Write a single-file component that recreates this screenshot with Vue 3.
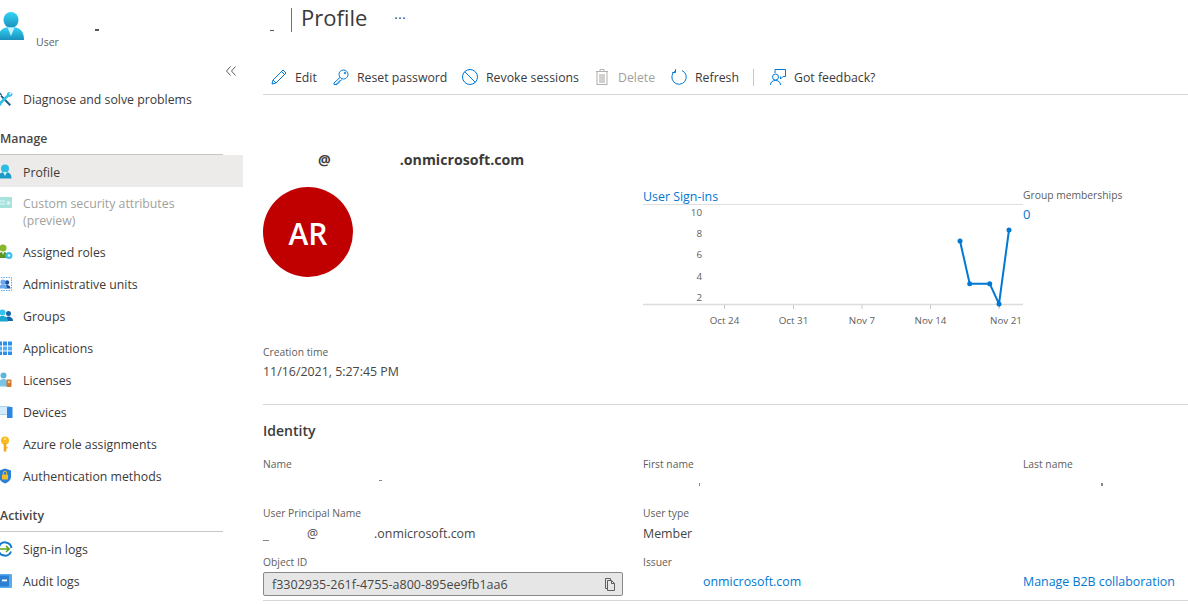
<script setup>
const xTicks = [
  { x: 81.5, tx: 81.5, label: 'Oct 24' },
  { x: 150.5, tx: 150.5, label: 'Oct 31' },
  { x: 219, tx: 219, label: 'Nov 7' },
  { x: 287.5, tx: 287.5, label: 'Nov 14' },
  { x: 356, tx: 363, label: 'Nov 21' },
]
const yTicks = [
  { y: 7, label: '10' },
  { y: 28.5, label: '8' },
  { y: 49.5, label: '6' },
  { y: 71.5, label: '4' },
  { y: 92.5, label: '2' },
]
const points = [
  [317, 36],
  [326.7, 78.7],
  [346.7, 78.7],
  [356, 99],
  [366, 25],
]
const linePoints = points.map((p) => p.join(',')).join(' ')
</script>

<template>
  <div class="page">
    <aside class="sidebar">
      <div class="res-head">
        <svg class="res-icon" width="28" height="29" viewBox="0 0 28 29">
          <defs>
            <linearGradient id="personGrad" x1="0" y1="0" x2="0" y2="1">
              <stop offset="0" stop-color="#32d4f5" />
              <stop offset="1" stop-color="#1a8fbd" />
            </linearGradient>
          </defs>
          <ellipse cx="14" cy="8" rx="7.500" ry="8" fill="url(#personGrad)" />
          <path d="M1 28c0-9 4-13 13-13s13 4 13 13z" fill="url(#personGrad)" />
          <path d="M10.500 15.500h7L14 24z" fill="#c9f1fb" />
        </svg>
        <div class="res-text">
          <span class="speck name-speck"></span>
          <div class="res-type">User</div>
        </div>
      </div>
      <div class="collapse">
        <svg width="10" height="10" viewBox="0 0 10 10" fill="none" stroke="#605e5c">
          <path d="M4.500 .5L.5 5l4 4.500M9.500 .5L5.500 5l4 4.500" />
        </svg>
      </div>

      <div class="nav-item">
        <svg class="nav-icon" viewBox="0 0 16 16">
          <path d="M3 1.500l2 2-1 1-2-2zM4.500 4l9.500 9.500-1.500 1.500L3.500 5.500z" fill="#1c5f8c" />
          <path d="M15 1.500a3 3 0 0 1-3.500 4.300L4.500 13a2 2 0 1 1-2-2l7.300-7A3 3 0 0 1 13.500 1L12 3l1 1z" fill="#32bfe8" />
        </svg>
        <span>Diagnose and solve problems</span>
      </div>

      <div class="section">Manage</div>
      <div class="nav-item active nudge">
        <svg class="nav-icon" viewBox="0 0 16 16">
          <circle cx="8" cy="4.500" r="4" fill="#2cbde4" />
          <path d="M1.500 14.500c0-4.500 2.500-6.500 6.500-6.500s6.500 2 6.500 6.500z" fill="#1a9ac6" />
          <path d="M6 8h4l-2 4z" fill="#d7f4fb" />
        </svg>
        <span>Profile</span>
      </div>
      <div class="nav-item two-line disabled">
        <svg class="nav-icon" viewBox="0 0 16 16">
          <rect x="1" y="2" width="14" height="11" rx="1" fill="#a6e3dc" />
          <path d="M3 6h5M3 9h5" stroke="#e4f7f5" stroke-width="1.200" />
          <circle cx="11.500" cy="8" r="2" fill="#d8f3ef" />
        </svg>
        <span>Custom security attributes<br />(preview)</span>
      </div>
      <div class="nav-item">
        <svg class="nav-icon" viewBox="0 0 16 16">
          <circle cx="6" cy="4" r="3.500" fill="#86b82c" />
          <path d="M0 14c0-4 2.500-6 6-6s6 2 6 6z" fill="#5e9624" />
          <path d="M4.800 8h2.400L6 11z" fill="#e2f0c8" />
          <circle cx="12" cy="11.500" r="3.500" fill="#3fc1ea" />
          <circle cx="12" cy="11.500" r="1.200" fill="#d6f3fb" />
        </svg>
        <span>Assigned roles</span>
      </div>
      <div class="nav-item">
        <svg class="nav-icon" viewBox="0 0 16 16">
          <rect x="1.500" y="1.500" width="13" height="13" fill="none" stroke="#5aaef0" stroke-dasharray="1.500 1" />
          <circle cx="10" cy="6.500" r="2.200" fill="#1b4f9c" />
          <path d="M7.500 12.500c0-2.500 1-3.500 2.500-3.500s3.500 1 3.500 3.500z" fill="#1b4f9c" />
          <circle cx="6" cy="6" r="2.600" fill="#6ea9f0" />
          <path d="M2 12.500c0-3 1.500-4.200 4-4.200s4 1.200 4 4.200z" fill="#6ea9f0" />
        </svg>
        <span>Administrative units</span>
      </div>
      <div class="nav-item">
        <svg class="nav-icon" viewBox="0 0 16 16">
          <circle cx="11.500" cy="5.500" r="2.500" fill="#1464a8" />
          <path d="M8 13c0-3 1.500-4.500 3.500-4.500S16 10 16 13z" fill="#1464a8" />
          <circle cx="5.500" cy="4.500" r="3" fill="#32c4ec" />
          <path d="M0 13.500c0-4 2.500-5.500 5.500-5.500s5.500 1.500 5.500 5.500z" fill="#1da5d2" />
        </svg>
        <span>Groups</span>
      </div>
      <div class="nav-item">
        <svg class="nav-icon" viewBox="0 0 16 16">
          <path fill="#2f8fe6" d="M1 1.500h4v4H1zM6 1.500h4v4H6zM11 1.500h4v4h-4z" />
          <path fill="#58aef2" d="M1 6.500h4v4H1zM6 6.500h4v4H6zM11 6.500h4v4h-4z" />
          <path fill="#2f8fe6" d="M1 11.500h4v3.500H1zM6 11.500h4v3.500H6zM11 11.500h4v3.500h-4z" />
        </svg>
        <span>Applications</span>
      </div>
      <div class="nav-item">
        <svg class="nav-icon" viewBox="0 0 16 16">
          <circle cx="6.500" cy="3.500" r="3" fill="#5db4dc" />
          <path d="M1 14.500c0-5 2.500-7.500 5.500-7.500S12 9.500 12 14.500z" fill="#7ac4e6" />
          <rect x="9.500" y="7.500" width="5" height="7.500" rx="1" fill="#d2762a" />
          <circle cx="12" cy="10" r="1.300" fill="#f5c78f" />
        </svg>
        <span>Licenses</span>
      </div>
      <div class="nav-item">
        <svg class="nav-icon" viewBox="0 0 16 16">
          <rect x="0" y="2" width="13" height="9" fill="#a8d4f7" />
          <rect x="0" y="3" width="11" height="7" fill="#d4ebfb" />
          <rect x="10" y="3" width="5.500" height="11" rx=".5" fill="#2c86e2" />
        </svg>
        <span>Devices</span>
      </div>
      <div class="nav-item">
        <svg class="nav-icon" viewBox="0 0 16 16">
          <circle cx="8" cy="4.500" r="4" fill="#f9bb1e" />
          <rect x="6.700" y="7" width="2.600" height="8.500" fill="#f4a81a" />
          <rect x="9" y="11" width="1.500" height="1.500" fill="#f4a81a" />
          <circle cx="8" cy="3" r="1" fill="#fde9ac" />
        </svg>
        <span>Azure role assignments</span>
      </div>
      <div class="nav-item">
        <svg class="nav-icon" viewBox="0 0 16 16">
          <path d="M8 .500l6 2v6c0 3.500-3 6-6 7-3-1-6-3.500-6-7v-6z" fill="#2a7fd6" />
          <rect x="5" y="6.500" width="6" height="5" rx=".5" fill="#f7bc22" />
          <path d="M6.300 6.500V5a1.700 1.700 0 0 1 3.400 0v1.500" fill="none" stroke="#f7bc22" />
        </svg>
        <span>Authentication methods</span>
      </div>

      <div class="section">Activity</div>
      <div class="nav-item nudge">
        <svg class="nav-icon" viewBox="0 0 16 16">
          <path d="M2 5.500A6.500 6.500 0 0 1 14.500 7M14 10.500A6.500 6.500 0 0 1 1.500 9" fill="none" stroke="#1478d0" stroke-width="2" />
          <path d="M3 8h9M9 5l3.200 3L9 11" fill="none" stroke="#58a618" stroke-width="1.600" />
        </svg>
        <span>Sign-in logs</span>
      </div>
      <div class="nav-item nudge">
        <svg class="nav-icon" viewBox="0 0 16 16">
          <rect x="1" y="1" width="14" height="14" rx="1" fill="#5aa9ea" />
          <rect x="1" y="2.500" width="11" height="11" fill="#2b80d4" />
          <rect x="5" y="6.500" width="5" height="1.800" fill="#fff" />
        </svg>
        <span>Audit logs</span>
      </div>
    </aside>

    <main class="main">
      <div class="title-row">
        <span class="speck title-speck"></span>
        <span class="title-bar"></span>
        <h1>Profile</h1>
        <span class="more">···</span>
      </div>

      <div class="toolbar">
        <button class="tool w-edit">
          <svg width="16" height="16" viewBox="0 0 16 16" fill="none" stroke="#0078d4">
            <path d="M1 15l1-4L12 1l3 3L5 14zM2 11l3 3M10.500 2.500l3 3" />
          </svg>
          Edit
        </button>
        <button class="tool w-reset">
          <svg width="16" height="16" viewBox="0 0 16 16" fill="none" stroke="#0078d4">
            <circle cx="10.500" cy="5.500" r="4.500" />
            <path d="M7 8.500l-6 5.500v1.500h3V14h2v-2h1.500l1-1.500" />
            <circle cx="12" cy="4" r=".8" />
          </svg>
          Reset password
        </button>
        <button class="tool w-revoke">
          <svg width="16" height="16" viewBox="0 0 16 16" fill="none" stroke="#0078d4">
            <circle cx="8" cy="8" r="7.500" />
            <path d="M2.700 2.700l10.600 10.600" />
          </svg>
          Revoke sessions
        </button>
        <button class="tool w-delete disabled">
          <svg width="16" height="16" viewBox="0 0 16 16">
            <path d="M2 2.500h12M6 2.500V.5h4v2" fill="none" stroke="#b3b0ad" />
            <rect x="3" y="2.500" width="10" height="13" fill="#fff" stroke="#b3b0ad" />
            <rect x="5" y="5" width="6" height="9" fill="#d2d0ce" />
          </svg>
          Delete
        </button>
        <button class="tool w-refresh">
          <svg width="16" height="16" viewBox="0 0 16 16" fill="none" stroke="#0078d4">
            <path d="M4.500 1.800a7.200 7.200 0 1 0 6.500-.3" />
            <path d="M4.500 .2v3.300H1.200" />
          </svg>
          Refresh
        </button>
        <span class="tool-sep"></span>
        <button class="tool">
          <svg width="16" height="16" viewBox="0 0 16 16" fill="none" stroke="#0078d4">
            <path d="M5 4V.5h10.500v7H13l-2.500 2.500V7.500" />
            <circle cx="5.500" cy="8" r="3" />
            <path d="M.5 16c0-3 2-4.500 5-4.500s5 1.500 5 4.500" />
          </svg>
          Got feedback?
        </button>
      </div>

      <div class="email"><span class="gap-a"></span>@<span class="gap-b"></span>.onmicrosoft.com</div>

      <div class="summary">
        <div class="col">
          <div class="avatar">AR</div>
          <div class="label created">Creation time</div>
          <div class="value">11/16/2021, 5:27:45 PM</div>
        </div>
        <div class="col">
          <div class="chart-title">User Sign-ins</div>
          <svg class="chart" width="380" height="124" viewBox="0 0 380 124">
            <text v-for="t in yTicks" :key="t.label" x="59" :y="t.y + 3.500" text-anchor="end" class="tick">{{ t.label }}</text>
            <line x1="0" y1="99.500" x2="380" y2="99.500" stroke="#dcdcdc" stroke-width="1.500" />
            <g v-for="t in xTicks" :key="t.label">
              <line :x1="t.x" y1="100" :x2="t.x" y2="104" stroke="#c8c6c4" />
              <text :x="t.tx" y="119" text-anchor="middle" class="tick">{{ t.label }}</text>
            </g>
            <polyline :points="linePoints" fill="none" stroke="#0078d4" stroke-width="2" />
            <circle v-for="p in points" :key="p[0]" :cx="p[0]" :cy="p[1]" r="2.500" fill="#0078d4" />
          </svg>
        </div>
        <div class="col">
          <div class="label">Group memberships</div>
          <div class="group-count">0</div>
        </div>
      </div>

      <h2 class="identity">Identity</h2>

      <div class="fields">
        <div class="field">
          <div class="label">Name</div>
          <div class="value"><span class="speck name-a"></span></div>
        </div>
        <div class="field">
          <div class="label">First name</div>
          <div class="value"><span class="speck name-b"></span></div>
        </div>
        <div class="field">
          <div class="label">Last name</div>
          <div class="value"><span class="speck name-c"></span></div>
        </div>
        <div class="field">
          <div class="label">User Principal Name</div>
          <div class="value"><span class="speck upn-a"></span><span class="gap-c"></span>@<span class="gap-d"></span>.onmicrosoft.com</div>
        </div>
        <div class="field">
          <div class="label">User type</div>
          <div class="value">Member</div>
        </div>
        <div class="field"></div>
        <div class="field">
          <div class="label">Object ID</div>
          <div class="id-box">
            <span>f3302935-261f-4755-a800-895ee9fb1aa6</span>
            <svg width="12" height="13" viewBox="0 0 12 13" fill="none" stroke="#605e5c">
              <path d="M3.500 2.500h4l3 3v7h-7zM7.500 2.500v3h3" />
              <path d="M3.500 10.500h-2v-10h5v2" />
            </svg>
          </div>
        </div>
        <div class="field">
          <div class="label">Issuer</div>
          <div class="value link"><span class="gap-e"></span>onmicrosoft.com</div>
        </div>
        <div class="field">
          <div class="label">&nbsp;</div>
          <div class="value link">Manage B2B collaboration</div>
        </div>
      </div>
      <div class="end-rule"></div>
    </main>
  </div>
</template>

<style scoped>
.page {
  display: flex;
  width: 1188px;
  height: 604px;
  overflow: hidden;
  background: #fff;
  font-family: "Open Sans", "Noto Sans", sans-serif;
  font-size: 12.300px;
  color: #3b3a39;
}

.speck {
  display: inline-block;
  height: 1px;
  background: #8a8886;
}

.sidebar {
  flex: none;
  width: 243px;
}
.res-head {
  display: flex;
  gap: 11px;
  box-sizing: border-box;
  height: 60px;
  padding-top: 12px;
}
.res-icon {
  flex: none;
  margin-left: -3px;
}
.res-text {
  display: flex;
  flex-direction: column;
  padding-top: 17px;
}
.name-speck {
  width: 4px;
  height: 2px;
  margin-left: 59px;
  background: #555;
}
.res-type {
  margin-top: 3px;
  font-size: 10.500px;
  line-height: 16px;
  color: #605e5c;
}
.collapse {
  display: flex;
  justify-content: flex-end;
  height: 23px;
  padding: 6px 7px 0 0;
  box-sizing: border-box;
}
.nav-item {
  display: flex;
  align-items: center;
  box-sizing: border-box;
  height: 32px;
}
.nav-item.nudge {
  padding-top: 2px;
}
.nav-item.two-line {
  height: 49px;
  line-height: 17px;
}
.nav-item.active {
  background: #edebe9;
}
.nav-item.disabled {
  color: #a19f9d;
}
.nav-icon {
  flex: none;
  width: 16px;
  height: 16px;
  margin-left: -3px;
  margin-right: 10px;
}
.nav-item.two-line .nav-icon {
  align-self: flex-start;
  margin-top: 8px;
}
.section {
  box-sizing: border-box;
  width: 223px;
  height: 40px;
  padding-top: 15px;
  line-height: 18px;
  border-bottom: 1px solid #c8c6c4;
  font-weight: 600;
  color: #484644;
}

.main {
  flex: 1;
  min-width: 0;
  padding-left: 20px;
}
.title-row {
  display: flex;
  align-items: center;
  height: 36px;
}
.title-speck {
  width: 4px;
  margin: 24px 0 0 7px;
  background: #555;
}
.title-bar {
  width: 1px;
  height: 24px;
  margin: 4px 9px 0 17px;
  background: #a4670d;
}
h1 {
  margin: -2px 0 0;
  font-size: 22px;
  font-weight: 400;
  line-height: 36px;
}
.more {
  margin-left: 27px;
  font-size: 13px;
  letter-spacing: 0.5px;
  color: #323130;
}
.toolbar {
  display: flex;
  align-items: center;
  height: 35px;
  margin-top: 24px;
  padding-left: 8px;
  box-sizing: border-box;
  border-bottom: 1px solid #d6d6d6;
}
.tool {
  display: flex;
  align-items: center;
  gap: 8px;
  padding: 0;
  border: 0;
  background: none;
  font: inherit;
  color: #3b3a39;
}
.tool.disabled {
  color: #a19f9d;
}
.w-edit {
  width: 62px;
}
.w-reset {
  width: 129px;
}
.w-revoke {
  width: 132px;
}
.w-delete {
  width: 77px;
}
.w-refresh {
  width: 82px;
}
.tool-sep {
  width: 1px;
  height: 17px;
  margin-right: 16px;
  background: #c8c6c4;
}
.email {
  margin-top: 55px;
  line-height: 20px;
  font-size: 14.200px;
  font-weight: 700;
}
.gap-a {
  display: inline-block;
  width: 55px;
}
.gap-b {
  display: inline-block;
  width: 69px;
}
.summary {
  display: grid;
  grid-template-columns: 380px 380px 1fr;
  height: 217px;
  margin-top: 17px;
  border-bottom: 1px solid #d6d6d6;
}
.avatar {
  width: 90px;
  height: 90px;
  border-radius: 50%;
  background: #c00000;
  color: #fff;
  font-size: 30px;
  font-weight: 600;
  line-height: 94px;
  text-align: center;
}
.label {
  font-size: 10.300px;
  line-height: 16px;
  color: #605e5c;
}
.created {
  margin-top: 67px;
}
.value {
  font-size: 12.400px;
  line-height: 24px;
  min-height: 24px;
  color: #484644;
}
.field .value {
  height: 26px;
  line-height: 26px;
  min-height: 26px;
}
.chart-title {
  height: 17px;
  line-height: 20px;
  border-bottom: 1px solid #e1dfdd;
  color: #0078d4;
  font-size: 12.400px;
}
.chart {
  display: block;
}
.tick {
  font-size: 9.800px;
  fill: #605e5c;
}
.group-count {
  margin-top: 2px;
  line-height: 18px;
  font-size: 13px;
  color: #0078d4;
}
.identity {
  margin: 16px 0 15px;
  font-size: 14px;
  font-weight: 600;
  line-height: 20px;
}
.fields {
  display: grid;
  grid-template-columns: 380px 380px 1fr;
  row-gap: 7px;
}
.gap-c {
  display: inline-block;
  width: 38px;
}
.gap-d {
  display: inline-block;
  width: 56px;
}
.gap-e {
  display: inline-block;
  width: 60px;
}
.upn-a {
  width: 6px;
  margin-bottom: -3px;
}
.name-a {
  width: 3px;
  margin: 0 0 8px 116px;
}
.name-b {
  width: 1px;
  height: 3px;
  margin: 0 0 3px 56px;
}
.name-c {
  width: 2px;
  height: 3px;
  margin: 0 0 3px 78px;
}
.link {
  color: #0078d4;
}
.field .link {
  margin-top: -1px;
}
.id-box {
  display: flex;
  align-items: center;
  justify-content: space-between;
  box-sizing: border-box;
  width: 360px;
  height: 24px;
  margin-top: 2px;
  padding: 0 6px 0 8px;
  border: 1px solid #8a8886;
  border-radius: 2px;
  background: #e6e6e6;
  font-size: 12.500px;
  color: #484644;
}
.end-rule {
  height: 1px;
  margin-top: 4px;
  background: #d6d6d6;
}
</style>
